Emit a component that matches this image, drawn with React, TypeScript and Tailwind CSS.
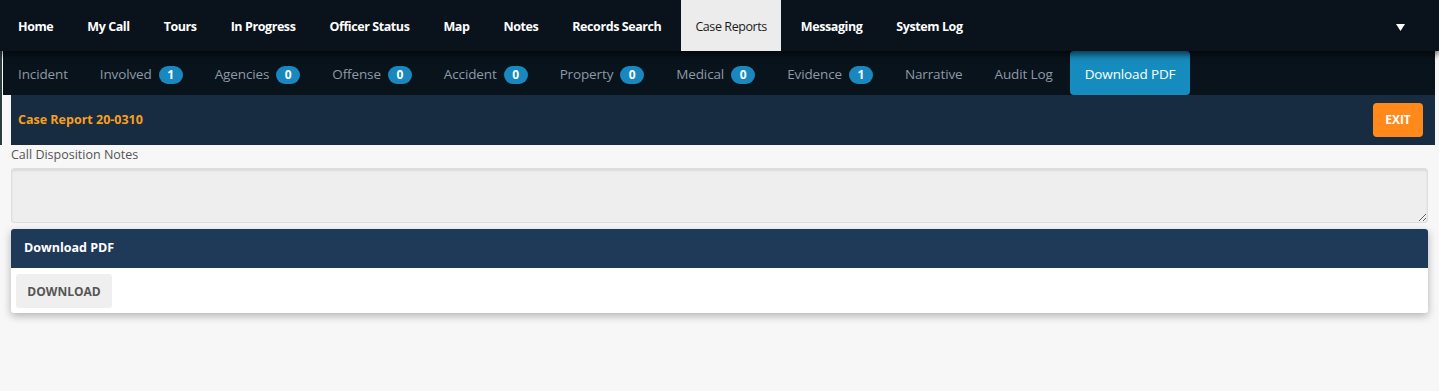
import { useState } from "react";

const mainNav = [
  "Home",
  "My Call",
  "Tours",
  "In Progress",
  "Officer Status",
  "Map",
  "Notes",
  "Records Search",
  "Case Reports",
  "Messaging",
  "System Log",
];

const reportTabs: { label: string; count?: number }[] = [
  { label: "Incident" },
  { label: "Involved", count: 1 },
  { label: "Agencies", count: 0 },
  { label: "Offense", count: 0 },
  { label: "Accident", count: 0 },
  { label: "Property", count: 0 },
  { label: "Medical", count: 0 },
  { label: "Evidence", count: 1 },
  { label: "Narrative" },
  { label: "Audit Log" },
  { label: "Download PDF" },
];

export default function App() {
  const [activeTab, setActiveTab] = useState("Download PDF");
  const [notes, setNotes] = useState("");

  return (
    <div
      className="min-h-[391px] w-full bg-[#f7f7f7] text-[#333]"
      style={{ fontFamily: '"Open Sans", "Noto Sans", sans-serif' }}
    >
      {/* top navigation */}
      <nav className="relative z-10 flex h-[51px] items-stretch bg-[#0a121b] pl-[4px] pr-[34px] shadow-[0_4px_6px_rgba(0,0,0,0.55)]">
        <ul className="flex items-stretch gap-[6px]">
          {mainNav.map((item) => {
            const isActive = item === "Case Reports";
            return (
              <li
                key={item}
                className={`flex items-center px-[14px] pt-[3px] text-[12.5px] tracking-[-0.42px] ${
                  isActive
                    ? "bg-[#ececec] font-normal text-[#1b1b1b]"
                    : "font-bold text-white"
                }`}
              >
                {item}
              </li>
            );
          })}
        </ul>
        <div className="ml-auto flex items-center">
          <svg width="9" height="7" viewBox="0 0 9 7" className="mt-[4px]">
            <path d="M0 0h9L4.5 7z" fill="#fff" />
          </svg>
        </div>
      </nav>

      <div className="flex">
        <div className="w-[2px] shrink-0 bg-[#2b3d3f]" />
        <div className="w-[1px] shrink-0 bg-white" />
        <div className="min-w-0 flex-1 pr-[4px]">
          {/* case report tabs */}
          <div className="flex h-[44px] items-stretch gap-[2px] bg-[#09131c]">
            {reportTabs.map((tab) => {
              const isActive = tab.label === activeTab;
              return (
                <button
                  key={tab.label}
                  type="button"
                  onClick={() => setActiveTab(tab.label)}
                  className={`flex items-center gap-[7px] rounded-[4px] px-[15px] pt-[3px] text-[13.5px] tracking-[-0.13px] ${
                    isActive ? "bg-[#168cbe] text-white" : "text-[#8d99a5]"
                  }`}
                >
                  {tab.label}
                  {tab.count !== undefined && (
                    <span className="flex h-[18px] w-[24px] items-center justify-center rounded-full bg-[#1888be] pt-[1px] text-[12px] font-bold tracking-normal text-white">
                      {tab.count}
                    </span>
                  )}
                </button>
              );
            })}
          </div>

          <div className="pl-[8px]">
            {/* case header */}
            <div className="flex h-[50px] items-center justify-between bg-[#172b41] pl-[7px] pr-[12px]">
              <h1 className="text-[12.5px] font-bold text-[#f7a01c]">
                Case Report 20-0310
              </h1>
              <button
                type="button"
                className="h-[34px] w-[50px] rounded-[4px] bg-[#ff8a1b] text-[12px] font-bold text-white"
              >
                EXIT
              </button>
            </div>
          </div>
        </div>
      </div>

      <div className="pl-[11px] pr-[11px]">
        <label className="block text-[12.5px] leading-[19px] text-[#555]">
          Call Disposition Notes
        </label>
        <textarea
          value={notes}
          onChange={(e) => setNotes(e.target.value)}
          className="mt-[4px] block h-[55px] w-full rounded-[3px] border border-[#dedede] bg-[#eeeeee] shadow-[inset_0_2px_2px_rgba(0,0,0,0.08)] outline-none"
        />

        {/* download card */}
        <div className="mt-[6px] overflow-hidden rounded-[3px] bg-white shadow-[0_3px_8px_rgba(0,0,0,0.28)]">
          <div className="flex h-[39px] items-center bg-[#1f3a58] px-[13px] text-[12.5px] font-bold text-white">
            Download PDF
          </div>
          <div className="px-[5px] pb-[5px] pt-[6px]">
            <button
              type="button"
              className="h-[34px] w-[96px] rounded-[3px] bg-[#efefef] pt-[2px] text-[12px] font-bold text-[#555]"
            >
              DOWNLOAD
            </button>
          </div>
        </div>
      </div>
    </div>
  );
}
